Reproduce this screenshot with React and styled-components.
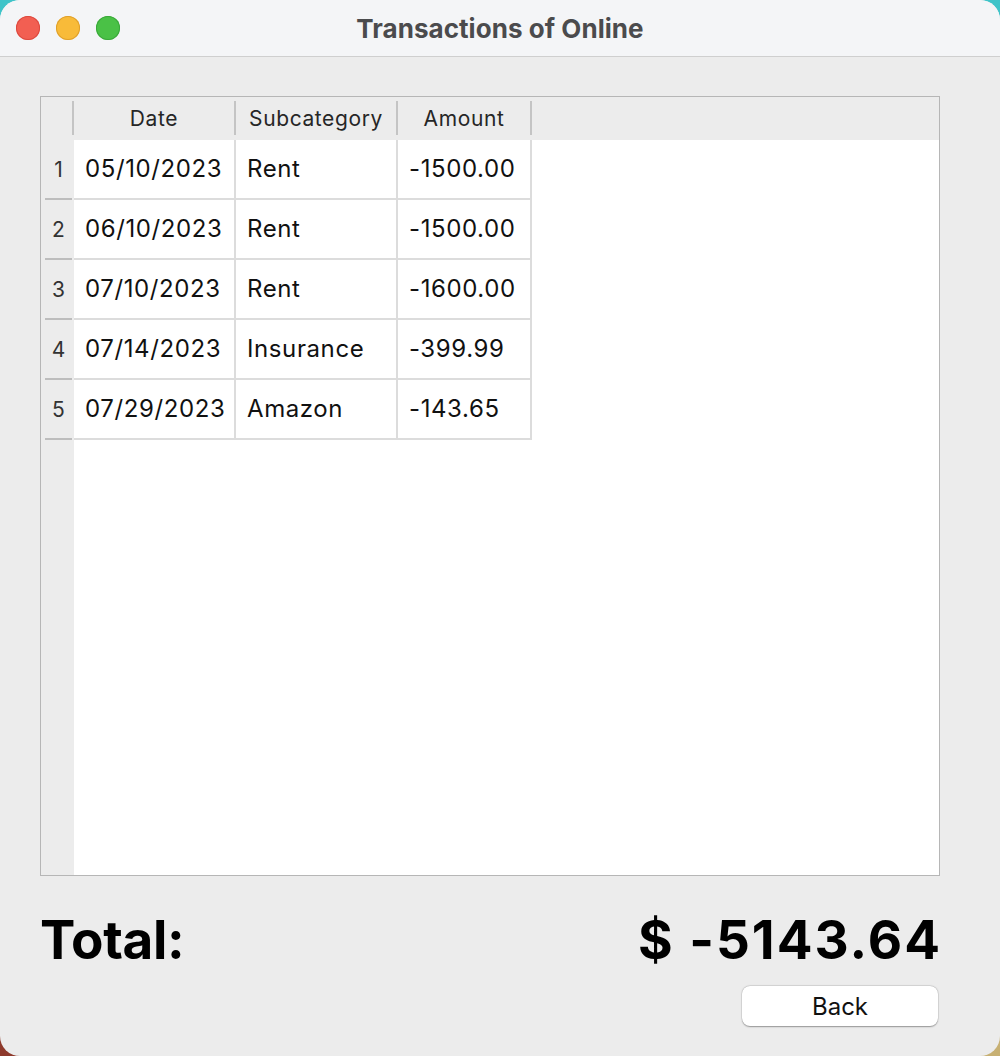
import React from "react";
import styled, { createGlobalStyle } from "styled-components";

const GlobalStyle = createGlobalStyle`
  html, body {
    margin: 0;
    padding: 0;
  }
  body {
    width: 1000px;
    height: 1056px;
    overflow: hidden;
    background:
      linear-gradient(to right, #8e3a2c 50%, #c7b073 50%) left bottom / 100% 50% no-repeat,
      #3fc4c9;
    font-family: Inter, "Noto Sans", "Liberation Sans", sans-serif;
  }
`;

const Window = styled.div`
  width: 1000px;
  height: 1056px;
  border-radius: 20px;
  overflow: hidden;
  background: #ececec;
  display: flex;
  flex-direction: column;
`;

const TitleBar = styled.div`
  height: 56px;
  flex-shrink: 0;
  background: #f4f5f7;
  border-bottom: 1px solid #cfcfcf;
  display: flex;
  align-items: center;
  position: relative;
`;

const Lights = styled.div`
  display: flex;
  gap: 16px;
  padding-left: 16px;
`;

const Light = styled.span`
  width: 24px;
  height: 24px;
  border-radius: 50%;
  background: ${({ color }) => color};
  box-shadow: inset 0 0 0 1px ${({ edge }) => edge};
`;

const Title = styled.div`
  position: absolute;
  left: 0;
  right: 0;
  text-align: center;
  font-size: 26px;
  font-weight: 700;
  letter-spacing: 0.05px;
  color: #4b4b4d;
  pointer-events: none;
`;

const Content = styled.div`
  flex: 1;
  display: flex;
  flex-direction: column;
  padding: 39px 60px 0 40px;
`;

const Frame = styled.div`
  height: 780px;
  box-sizing: border-box;
  border: 1px solid #b6b6b6;
  background: #fff;
  display: flex;
  flex-direction: column;
`;

const HeaderRow = styled.div`
  height: 43px;
  flex-shrink: 0;
  background: #ececec;
  display: flex;
  align-items: stretch;
`;

const Corner = styled.div`
  width: 31px;
  border-right: 2px solid #c4c4c4;
  margin: 4px 0 5px;
`;

const HeadCell = styled.div`
  width: ${({ w }) => w}px;
  border-right: 2px solid #c4c4c4;
  margin: 4px 0 5px;
  display: flex;
  align-items: center;
  justify-content: center;
  font-size: 21px;
  color: #262626;
  letter-spacing: 0.6px;
`;

const Body = styled.div`
  flex: 1;
  display: flex;
`;

const RowHeaders = styled.div`
  width: 33px;
  background: #ececec;
  display: flex;
  flex-direction: column;
`;

const RowNumber = styled.div`
  height: 58px;
  border-bottom: 2px solid #bdbdbd;
  margin: 0 2px 0 4px;
  display: flex;
  align-items: center;
  justify-content: center;
  font-size: 21px;
  color: #333;
`;

const Grid = styled.div`
  display: flex;
  flex-direction: column;
  align-self: flex-start;
`;

const Row = styled.div`
  display: flex;
  height: 60px;
`;

const Cell = styled.div`
  width: ${({ w }) => w - 13}px;
  padding-left: 11px;
  border-right: 2px solid #dcdcdc;
  border-bottom: 2px solid #dcdcdc;
  display: flex;
  align-items: center;
  font-size: 24px;
  letter-spacing: 0.6px;
  color: #111;
  padding-bottom: 2px;
`;

const Footer = styled.div`
  display: flex;
  justify-content: space-between;
  align-items: center;
  margin-top: 32px;
`;

const Big = styled.div`
  font-size: 53px;
  font-weight: 700;
  color: #000;
  letter-spacing: ${({ spread }) => (spread ? "2px" : "-0.3px")};
  margin-right: ${({ spread }) => (spread ? "-2px" : "0")};
  line-height: 64px;
`;

const ButtonRow = styled.div`
  display: flex;
  justify-content: flex-end;
  margin-top: 14px;
  padding-right: 2px;
`;

const Button = styled.button`
  width: 196px;
  height: 40px;
  border: none;
  border-radius: 8px;
  background: #fff;
  box-shadow: 0 0.5px 1.5px rgba(0, 0, 0, 0.35), 0 0 0 0.5px rgba(0, 0, 0, 0.08);
  font-family: inherit;
  font-size: 24px;
  color: #111;
`;

const widths = [162, 162, 134];

const rows = [
  ["05/10/2023", "Rent", "-1500.00"],
  ["06/10/2023", "Rent", "-1500.00"],
  ["07/10/2023", "Rent", "-1600.00"],
  ["07/14/2023", "Insurance", "-399.99"],
  ["07/29/2023", "Amazon", "-143.65"],
];

export default function App() {
  return (
    <>
      <GlobalStyle />
      <Window>
        <TitleBar>
          <Lights>
            <Light color="#f25f52" edge="#dc4a3f" />
            <Light color="#f8bb39" edge="#dfa02c" />
            <Light color="#4ac146" edge="#3aa83a" />
          </Lights>
          <Title>Transactions of Online</Title>
        </TitleBar>
        <Content>
          <Frame>
            <HeaderRow>
              <Corner />
              <HeadCell w={160}>Date</HeadCell>
              <HeadCell w={160}>Subcategory</HeadCell>
              <HeadCell w={132}>Amount</HeadCell>
            </HeaderRow>
            <Body>
              <RowHeaders>
                {rows.map((_, i) => (
                  <RowNumber key={i}>{i + 1}</RowNumber>
                ))}
              </RowHeaders>
              <Grid>
                {rows.map((r, i) => (
                  <Row key={i}>
                    {r.map((v, j) => (
                      <Cell key={j} w={widths[j]}>
                        {v}
                      </Cell>
                    ))}
                  </Row>
                ))}
              </Grid>
            </Body>
          </Frame>
          <Footer>
            <Big>Total:</Big>
            <Big spread>$ -5143.64</Big>
          </Footer>
          <ButtonRow>
            <Button>Back</Button>
          </ButtonRow>
        </Content>
      </Window>
    </>
  );
}
